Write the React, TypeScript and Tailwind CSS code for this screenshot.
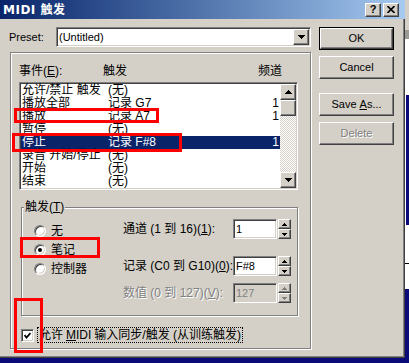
const raised =
  "bg-[#d4d0c8] border border-t-white border-l-white border-r-[#404040] border-b-[#404040] shadow-[inset_-1px_-1px_0_#808080]"
const sunken =
  "border border-t-[#808080] border-l-[#808080] border-r-white border-b-white shadow-[inset_1px_1px_0_#404040,inset_-1px_-1px_0_#d4d0c8]"
const etched = "border border-[#808080] shadow-[inset_1px_1px_0_#fff,1px_1px_0_#fff]"
const disabledText = "text-[#808080] [text-shadow:1px_1px_0_#fff]"

function Tri({ up, w = 7, h = 4, color = "#000" }: { up?: boolean; w?: number; h?: number; color?: string }) {
  const pts = up ? `0,${h} ${w},${h} ${w / 2},0` : `0,0 ${w},0 ${w / 2},${h}`
  return (
    <svg width={w} height={h} viewBox={`0 0 ${w} ${h}`} shapeRendering="crispEdges">
      <polygon points={pts} fill={color} />
    </svg>
  )
}

function Spin({ disabled }: { disabled?: boolean }) {
  const c = disabled ? "#808080" : "#000"
  return (
    <div className="ml-[1px] flex h-[20px] w-[13px] flex-col">
      <div className={`${raised} flex h-[10px] items-center justify-center`}>
        <Tri up w={5} h={3} color={c} />
      </div>
      <div className={`${raised} flex h-[10px] items-center justify-center`}>
        <Tri w={5} h={3} color={c} />
      </div>
    </div>
  )
}

function Radio({ checked, label }: { checked?: boolean; label: string }) {
  return (
    <div className="flex h-[19px] items-center">
      <div className="flex h-[12px] w-[12px] items-center justify-center rounded-full border border-t-[#808080] border-l-[#808080] border-r-white border-b-white bg-white shadow-[inset_1px_1px_0_#404040,inset_-1px_-1px_0_#d4d0c8]">
        {checked && <div className="h-[4px] w-[4px] rounded-full bg-black" />}
      </div>
      <span className="ml-[5px] text-[12px] leading-[14px]">{label}</span>
    </div>
  )
}

const rows = [
  ["允许/禁止 触发", "(无)", ""],
  ["播放全部", "记录 G7", "1"],
  ["播放", "记录 A7", "1"],
  ["暂停", "(无)", ""],
  ["停止", "记录 F#8", "1"],
  ["录音 开始/停止", "(无)", ""],
  ["开始", "(无)", ""],
  ["结束", "(无)", ""],
]

function TitleBar() {
  return (
    <div className="flex h-[19px] items-center justify-between bg-linear-to-r from-[#0a246a] to-[#a6caf0] pl-[3px] pr-[6px]">
      <span className="font-['DejaVu_Sans','Noto_Sans_CJK_SC',sans-serif] text-[12px] font-bold leading-[14px] tracking-[0.5px] text-white">
        MIDI 触发
      </span>
      <div className="flex gap-[2px]">
        <div className={`${raised} flex h-[14px] w-[16px] items-center justify-center text-[11px] font-bold leading-none`}>?</div>
        <div className={`${raised} flex h-[14px] w-[16px] items-center justify-center`}>
          <svg width="8" height="7" viewBox="0 0 8 7">
            <path d="M0.5 0 L7.5 7 M7.5 0 L0.5 7" stroke="#000" strokeWidth="1.6" />
          </svg>
        </div>
      </div>
    </div>
  )
}

function EventList() {
  return (
    <div className={`${sunken} mt-[4px] flex h-[108px] w-[279px] shrink-0 bg-white p-[1px]`}>
      <div className="flex w-[259px] flex-col">
        {rows.map(([ev, trig, ch], i) => (
          <div
            key={i}
            className={`flex h-[13px] items-center text-[12px] leading-[13px] ${i === 4 ? "bg-[#0a246a] text-white" : ""}`}
          >
            <span className="w-[87px] shrink-0 pl-[1px] whitespace-nowrap">{ev}</span>
            <span className="flex-1 whitespace-nowrap">{trig}</span>
            <span className="pr-[1px]">{ch}</span>
          </div>
        ))}
      </div>
      <div className="flex w-[16px] flex-col">
        <div className={`${raised} flex h-[16px] items-center justify-center`}>
          <Tri up />
        </div>
        <div className={`${raised} h-[16px]`} />
        <div className="flex-1 bg-[repeating-conic-gradient(#fff_0_25%,#d4d0c8_0_50%)] bg-[length:2px_2px]" />
        <div className={`${raised} flex h-[16px] items-center justify-center`}>
          <Tri />
        </div>
      </div>
    </div>
  )
}

function NumberField({ label, value, disabled }: { label: React.ReactNode; value: string; disabled?: boolean }) {
  return (
    <div className="flex h-[20px] items-center">
      <span className={`w-[110px] shrink-0 whitespace-nowrap text-[12px] leading-[14px] ${disabled ? disabledText : ""}`}>{label}</span>
      <div
        className={`${sunken} flex h-[20px] w-[44px] items-center pl-[2px] text-[11px] ${disabled ? "bg-[#d4d0c8] text-[#808080]" : "bg-white"}`}
      >
        {value}
      </div>
      <Spin disabled={disabled} />
    </div>
  )
}

function TriggerGroup() {
  return (
    <div className={`${etched} relative mt-[17px] ml-[2px] flex h-[109px] w-[277px] shrink-0`}>
      <span className="absolute top-[-8px] left-[2px] bg-[#d4d0c8] px-[1px] text-[12px] leading-[14px]">
        触发(<span className="underline">T</span>)
      </span>
      <div className="flex w-[101px] shrink-0 flex-col pt-[13px] pl-[12px]">
        <Radio label="无" />
        <Radio label="笔记" checked />
        <Radio label="控制器" />
      </div>
      <div className="flex flex-col pt-[11px]">
        <NumberField
          label={
            <>
              通道 (1 到 16)(<span className="underline">1</span>):
            </>
          }
          value="1"
        />
        <div className="mt-[17px]">
          <NumberField
            label={
              <>
                记录 (C0 到 G10)(<span className="underline">0</span>):
              </>
            }
            value="F#8"
          />
        </div>
        <div className="mt-[7px]">
          <NumberField
            label={
              <>
                数值 (0 到 127)(<span className="underline">V</span>):
              </>
            }
            value="127"
            disabled
          />
        </div>
      </div>
    </div>
  )
}

function DialogButton({ children, def, disabled, className = "" }: { children: React.ReactNode; def?: boolean; disabled?: boolean; className?: string }) {
  const inner = (
    <div className={`${raised} flex h-full w-full items-center justify-center text-[11px] ${disabled ? disabledText : ""}`}>
      {children}
    </div>
  )
  return <div className={`h-[23px] w-[75px] ${def ? "border border-black" : ""} ${className}`}>{inner}</div>
}

function Dialog() {
  return (
    <div className="flex h-[358px] w-[405px] flex-col">
      <TitleBar />
      <div className="flex flex-1 border-r border-b border-[#404040] bg-[#d4d0c8] pt-[8px] pr-[8px] pl-[9px] shadow-[inset_-1px_-1px_0_#808080]">
        <div className="flex w-[302px] shrink-0 flex-col">
          <div className="flex h-[20px] items-center">
            <span className="w-[47px] shrink-0 text-[11px]">Preset:</span>
            <div className={`${sunken} flex h-[20px] w-[255px] items-center bg-white p-[1px]`}>
              <span className="flex-1 pl-[1px] text-[11px]">(Untitled)</span>
              <div className={`${raised} flex h-[16px] w-[16px] items-center justify-center`}>
                <Tri />
              </div>
            </div>
          </div>
          <div className={`${etched} mt-[5px] ml-[1px] flex h-[297px] w-[301px] flex-col pt-[11px] pl-[8px]`}>
            <div className="flex h-[14px] w-[280px] text-[12px] leading-[14px]">
              <div className="w-[84px] shrink-0">
                事件(<span className="underline">E</span>):
              </div>
              <div className="w-[155px] shrink-0">触发</div>
              <div className="shrink-0">频道</div>
            </div>
            <EventList />
            <TriggerGroup />
            <div className="mt-[11px] ml-[2px] flex h-[16px] items-center">
              <div className={`${sunken} flex h-[13px] w-[13px] items-center justify-center bg-white`}>
                <svg width="7" height="7" viewBox="0 0 7 7">
                  <path d="M0.5 3 L2.5 5.5 L6.5 1" stroke="#000" strokeWidth="1.8" fill="none" />
                </svg>
              </div>
              <div className="ml-[3px] flex h-[16px] items-center border border-dotted border-black px-[1px] text-[12px] leading-[14px] whitespace-nowrap">
                允许 <span className="mx-[3px] underline">M</span>
                <span className="-ml-[3px] mr-[3px]">IDI</span> 输入同步/触发 (从训练触发)
              </div>
            </div>
          </div>
        </div>
        <div className="ml-[8px] flex w-[75px] flex-col">
          <DialogButton def>OK</DialogButton>
          <DialogButton className="mt-[6px]">Cancel</DialogButton>
          <DialogButton className="mt-[14px]">
            Save <span className="ml-[3px] underline">A</span>s...
          </DialogButton>
          <DialogButton className="mt-[6px]" disabled>
            Delete
          </DialogButton>
        </div>
      </div>
    </div>
  )
}

function RightStrip() {
  return (
    <div className="flex w-[4px] flex-col">
      <div className="h-[30px] bg-[#d4d0c8]" />
      <div className="h-[9px] bg-[#9c9a94]" />
      <div className="h-[56px] bg-white" />
      <div className="flex h-[130px]">
        <div className="w-[1px] bg-white" />
        <div className="flex-1 bg-[#0a0a78]" />
      </div>
      <div className="h-[38px] bg-white" />
      <div className="h-[1px] bg-black" />
      <div className="h-[25px] bg-white" />
      <div className="flex-1 bg-[#0a0a78]" />
    </div>
  )
}

export default function App() {
  return (
    <div className="relative flex h-[363px] w-[409px] flex-col overflow-hidden bg-white font-['Liberation_Sans','Noto_Sans_CJK_SC',sans-serif] text-black">
      <div className="flex h-[358px]">
        <Dialog />
        <RightStrip />
      </div>
      <div className="h-[5px] bg-[#0a0a78]" />
      {/* red annotation boxes */}
      <div className="absolute top-[108px] left-[14px] h-[15px] w-[145px] border-[3px] border-[#ff0000]" />
      <div className="absolute top-[133px] left-[12px] h-[19px] w-[170px] border-[3px] border-[#ff0000]" />
      <div className="absolute top-[237px] left-[20px] h-[21px] w-[80px] border-[3px] border-[#ff0000]" />
      <div className="absolute top-[298px] left-[14px] h-[55px] w-[29px] border-[3px] border-[#ff0000]" />
    </div>
  )
}
